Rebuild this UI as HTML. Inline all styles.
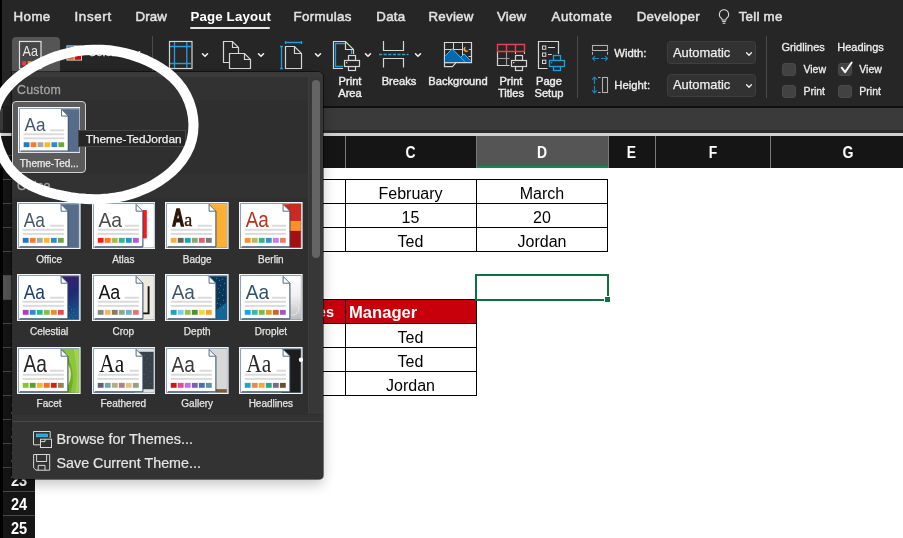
<!DOCTYPE html><html><head><meta charset="utf-8"><title>Excel Themes</title><style>
*{margin:0;padding:0;box-sizing:border-box}
html,body{width:903px;height:538px;overflow:hidden;background:#fff}
body{position:relative;font-family:"Liberation Sans",sans-serif;color:#fff}
.a{position:absolute}
.t{position:absolute;white-space:nowrap;line-height:1}
.tab{position:absolute;top:10px;font-size:13.3px;line-height:14px;white-space:nowrap;color:#e2e2e2;-webkit-text-stroke:0.5px #e2e2e2}
.lbl{position:absolute;font-size:10.4px;line-height:12.2px;white-space:nowrap;color:#ededed;text-align:center;transform:translateX(-50%) scaleX(1.07);-webkit-text-stroke:0.4px #ededed}
.cell{position:absolute;font-size:16px;line-height:25px;color:#000;text-align:center;white-space:nowrap}
.hl{position:absolute;background:#000;height:1px}
.vl{position:absolute;background:#000;width:1px}
.ch{position:absolute;top:136px;height:32px;font-weight:bold;font-size:17.4px;line-height:32.6px;text-align:center;color:#fff;transform:scaleX(0.8)}
.rh{position:absolute;left:3px;width:32px;height:24px;border-top:1px solid #4a4a4a}.rh span{display:block;font-weight:bold;font-size:17.4px;line-height:25px;text-align:center;color:#fff;transform:scaleX(0.84)}
.th{position:absolute;width:64px;height:48px;background:#fff;border:1px solid #8094ad;overflow:hidden}
.tl{position:absolute;font-size:10px;line-height:11px;color:#e4e4e4;text-align:center;width:74px;white-space:nowrap;-webkit-text-stroke:0.25px #e4e4e4}
.cb{position:absolute;width:13.5px;height:13.5px;background:#424242;border:1px solid #4a4a4a;border-radius:3px}
</style></head><body><div id="app" style="position:absolute;left:0;top:0;width:903px;height:538px;will-change:transform">
<div class="a" style="left:0;top:0;width:3px;height:538px;background:#000"></div>
<div class="a" style="left:2px;top:0;width:901px;height:106px;background:#262626"></div>
<div class="a" style="left:0;top:105.5px;width:903px;height:2.5px;background:#0f0f0f"></div>
<div class="a" style="left:0;top:108px;width:903px;height:21.5px;background:#3a3a3a"></div>
<div class="a" style="left:0;top:129.5px;width:903px;height:4px;background:#2b2b2b"></div>
<div class="a" style="left:0;top:133.3px;width:903px;height:2.4px;background:#d0d0d0"></div>
<div class="a" style="left:0;top:135.6px;width:903px;height:32.4px;background:#151515"></div>
<div class="a" style="left:2.5px;top:105.5px;width:10px;height:27.8px;background:#202020"></div>
<div class="a" style="left:3px;top:168px;width:32px;height:370px;background:#151515"></div>
<div class="a" style="left:476px;top:136px;width:132px;height:32px;background:#555"></div>
<div class="a" style="left:476px;top:166.3px;width:132px;height:2.2px;background:#138a50"></div>
<div class="a" style="left:345px;top:136px;width:1px;height:32px;background:#7a7a7a"></div>
<div class="a" style="left:476px;top:136px;width:1px;height:32px;background:#7a7a7a"></div>
<div class="a" style="left:607.5px;top:136px;width:1px;height:32px;background:#7a7a7a"></div>
<div class="a" style="left:654.5px;top:136px;width:1px;height:32px;background:#7a7a7a"></div>
<div class="a" style="left:770.4px;top:136px;width:1px;height:32px;background:#7a7a7a"></div>
<div class="ch" style="left:345px;width:131px">C</div>
<div class="ch" style="left:476px;width:132px">D</div>
<div class="ch" style="left:608px;width:47px">E</div>
<div class="ch" style="left:655px;width:116px">F</div>
<div class="ch" style="left:771px;width:154px">G</div>
<div class="rh" style="top:179.3px;"><span>11</span></div>
<div class="rh" style="top:203.3px;"><span>12</span></div>
<div class="rh" style="top:227.3px;"><span>13</span></div>
<div class="rh" style="top:251.3px;"><span>14</span></div>
<div class="rh" style="top:275.3px; background:#555;"><span>15</span></div>
<div class="rh" style="top:299.3px;"><span>16</span></div>
<div class="rh" style="top:323.3px;"><span>17</span></div>
<div class="rh" style="top:347.3px;"><span>18</span></div>
<div class="rh" style="top:371.3px;"><span>19</span></div>
<div class="rh" style="top:395.3px;"><span>20</span></div>
<div class="rh" style="top:419.3px;"><span>21</span></div>
<div class="rh" style="top:443.3px;"><span>22</span></div>
<div class="rh" style="top:467.3px;"><span>23</span></div>
<div class="rh" style="top:491.3px;"><span>24</span></div>
<div class="rh" style="top:515.3px;"><span>25</span></div>
<div class="rh" style="top:155.3px;height:24px"></div>
<div class="a" style="left:36px;top:178.8px;width:572px;height:1.2px;background:#000"></div>
<div class="a" style="left:36px;top:202.8px;width:572px;height:1.2px;background:#000"></div>
<div class="a" style="left:36px;top:226.8px;width:572px;height:1.2px;background:#000"></div>
<div class="a" style="left:36px;top:250.8px;width:572px;height:1.2px;background:#000"></div>
<div class="a" style="left:344.6px;top:178.8px;width:1.2px;height:73.2px;background:#000"></div>
<div class="a" style="left:475.8px;top:178.8px;width:1.2px;height:73.2px;background:#000"></div>
<div class="a" style="left:607.2px;top:178.8px;width:1.2px;height:73.2px;background:#000"></div>
<div class="cell" style="left:345px;width:131px;top:180.5px;">February</div>
<div class="cell" style="left:476px;width:132px;top:180.5px;">March</div>
<div class="cell" style="left:345px;width:131px;top:204.5px;">15</div>
<div class="cell" style="left:476px;width:132px;top:204.5px;">20</div>
<div class="cell" style="left:345px;width:131px;top:228.5px;">Ted</div>
<div class="cell" style="left:476px;width:132px;top:228.5px;">Jordan</div>
<div class="a" style="left:36px;top:299px;width:440px;height:24px;background:#c7000b"></div>
<div class="a" style="left:36px;top:298.8px;width:441px;height:1.2px;background:#000"></div>
<div class="a" style="left:36px;top:322.8px;width:441px;height:1.2px;background:#000"></div>
<div class="a" style="left:36px;top:346.8px;width:441px;height:1.2px;background:#000"></div>
<div class="a" style="left:36px;top:370.8px;width:441px;height:1.2px;background:#000"></div>
<div class="a" style="left:36px;top:394.8px;width:441px;height:1.2px;background:#000"></div>
<div class="a" style="left:344.6px;top:298.8px;width:1.2px;height:97.2px;background:#000"></div>
<div class="a" style="left:475.8px;top:298.8px;width:1.2px;height:97.2px;background:#000"></div>
<div class="cell" style="left:349px;width:120px;top:299.6px;text-align:left;color:#fff;font-weight:bold;font-size:16.6px">Manager</div>
<div class="cell" style="left:290px;width:44px;top:299.8px;text-align:right;color:#fff;font-weight:bold;font-size:14.5px">Sales</div>
<div class="cell" style="left:345px;width:131px;top:324.5px;">Ted</div>
<div class="cell" style="left:345px;width:131px;top:348.5px;">Ted</div>
<div class="cell" style="left:345px;width:131px;top:372.5px;">Jordan</div>
<div class="a" style="left:475px;top:274px;width:134px;height:27px;border:2px solid #10703f"></div>
<div class="a" style="left:604px;top:296px;width:7px;height:7px;background:#10703f;border:1px solid #fff"></div>
<div class="tab" style="left:13.6px;letter-spacing:0.4px">Home</div>
<div class="tab" style="left:74.4px;letter-spacing:0.7px">Insert</div>
<div class="tab" style="left:135.5px;letter-spacing:0.1px">Draw</div>
<div class="tab" style="left:293.6px;letter-spacing:0.35px">Formulas</div>
<div class="tab" style="left:376.3px;letter-spacing:0.25px">Data</div>
<div class="tab" style="left:428.5px;letter-spacing:0.25px">Review</div>
<div class="tab" style="left:497px;letter-spacing:0.2px">View</div>
<div class="tab" style="left:551.6px;letter-spacing:0.48px">Automate</div>
<div class="tab" style="left:636.7px;letter-spacing:0.3px">Developer</div>
<div class="tab" style="left:738.7px;letter-spacing:0.25px">Tell me</div>
<div class="tab" style="left:190.4px;font-weight:bold;color:#fff;-webkit-text-stroke:0;letter-spacing:0.15px">Page Layout</div>
<div class="a" style="left:190.4px;top:27.2px;width:79.4px;height:2.2px;border-radius:1px;background:#e6e6e6"></div>
<svg class="a" style="left:716px;top:8px" width="16" height="18" viewBox="0 0 16 18"><path d="M8 1.8a4.6 4.6 0 0 0-2.6 8.4c.5.5.7 1 .7 1.8h3.8c0-.8.2-1.300.7-1.800A4.600 4.600 0 0 0 8 1.800z" fill="none" stroke="#dcdcdc" stroke-width="1.100"/><path d="M6.200 13.500h3.600M6.600 15.200h2.800" stroke="#dcdcdc" stroke-width="1.100" fill="none"/></svg>
<div class="a" style="left:12px;top:37px;width:48px;height:36px;background:#555;border-radius:4px 4px 0 0"></div>
<svg class="a" style="left:18px;top:40px;" width="26" height="30" viewBox="0 0 26 30"><rect x="1.5" y="1.5" width="21.5" height="27" fill="#464646" stroke="#e0e0e0" stroke-width="1.2"/><text x="4.6" y="15.7" font-family="Liberation Sans,sans-serif" font-size="14.6" fill="#e8e8e8" textLength="15.4" lengthAdjust="spacingAndGlyphs">Aa</text><rect x="4.1" y="21.2" width="3.9" height="4.2" fill="#e8394f"/><rect x="9.7" y="21.2" width="3.9" height="4.2" fill="#f0a030"/><rect x="15.3" y="21.2" width="3.9" height="4.2" fill="#3a9ad9"/></svg>
<svg class="a" style="left:66px;top:45px;" width="17" height="16" viewBox="0 0 17 16"><rect x="0.5" y="0.5" width="15.5" height="15" fill="#f4f4f4"/><rect x="1.2" y="1.2" width="6.6" height="6.4" fill="#2b88d8"/><rect x="8.6" y="1.2" width="6.6" height="6.4" fill="#e8e8e8"/><rect x="1.2" y="8.4" width="6.6" height="6.4" fill="#d9682a"/><rect x="8.6" y="8.4" width="6.6" height="6.4" fill="#c9100e"/></svg>
<div class="t" style="left:88px;top:46.5px;font-size:11.5px;color:#eee;-webkit-text-stroke:0.3px #eee">Colors</div>
<svg class="a" style="left:131px;top:47.5px;" width="12" height="10" viewBox="0 0 12 10"><path d="M3.5 3.75L6 6.25L8.5 3.75" fill="none" stroke="#f0f0f0" stroke-width="1.6" stroke-linecap="round" stroke-linejoin="round"/></svg>
<div class="a" style="left:152px;top:36px;width:1px;height:35px;background:#4a4a4a"></div>
<div class="a" style="left:577px;top:36px;width:1px;height:62px;background:#4a4a4a"></div>
<div class="a" style="left:766px;top:36px;width:1px;height:62px;background:#4a4a4a"></div>
<svg class="a" style="left:0;top:0" width="903" height="106" viewBox="0 0 903 106"><rect x="169.5" y="41.5" width="22.5" height="27" fill="#2a2726" stroke="#d6d6d6" stroke-width="1.2"/><path d="M174.5 42v26M186.8 42v26M170 46.5h21.5M170 63.5h21.5" stroke="#1ba1e2" stroke-width="1.3" fill="none"/><path d="M229.5 62.5H223.5V41.5H232.5L238.5 47.5V53.5" fill="none" stroke="#d6d6d6" stroke-width="1.2"/><path d="M232.5 41.5V47.5H238.5" fill="none" stroke="#d6d6d6" stroke-width="1.2"/><path d="M229.5 53.5H244.5L250.5 59.5V68.5H229.5z" fill="none" stroke="#d6d6d6" stroke-width="1.2"/><path d="M244.5 53.5V59.5H250.5" fill="none" stroke="#d6d6d6" stroke-width="1.2"/><path d="M285.5 46.5H294.5L301.5 53.5V68.5H285.5z" fill="none" stroke="#d6d6d6" stroke-width="1.2"/><path d="M294.5 46.5V53.5H301.5" fill="none" stroke="#d6d6d6" stroke-width="1.2"/><path d="M285.5 42.5H301.5M285.5 41V44M301.5 41V44M281.5 46.5V68.5M280 46.5H283M280 68.5H283" fill="none" stroke="#1ba1e2" stroke-width="1.3"/></svg>
<svg class="a" style="left:198.8px;top:50.4px;" width="12" height="10" viewBox="0 0 12 10"><path d="M3.5 3.75L6 6.25L8.5 3.75" fill="none" stroke="#f0f0f0" stroke-width="1.6" stroke-linecap="round" stroke-linejoin="round"/></svg>
<svg class="a" style="left:255px;top:50.4px;" width="12" height="10" viewBox="0 0 12 10"><path d="M3.5 3.75L6 6.25L8.5 3.75" fill="none" stroke="#f0f0f0" stroke-width="1.6" stroke-linecap="round" stroke-linejoin="round"/></svg>
<svg class="a" style="left:312px;top:50.4px;" width="12" height="10" viewBox="0 0 12 10"><path d="M3.5 3.75L6 6.25L8.5 3.75" fill="none" stroke="#f0f0f0" stroke-width="1.6" stroke-linecap="round" stroke-linejoin="round"/></svg>
<svg class="a" style="left:0;top:0" width="903" height="106" viewBox="0 0 903 106"><path d="M343 68.5H333.5V41.5H345.5L353.5 49.5V54" fill="none" stroke="#d6d6d6" stroke-width="1.2"/><path d="M345.5 41.5V49.5H353.5" fill="none" stroke="#d6d6d6" stroke-width="1.2"/><path d="M345 43.5H335.5V66.5H343M351.5 50V54" fill="none" stroke="#1ba1e2" stroke-width="1.3"/><rect x="348.5" y="55.5" width="7" height="5" fill="#262626" stroke="#d6d6d6" stroke-width="1.2"/><rect x="348.5" y="66.5" width="7" height="4" fill="#262626" stroke="#d6d6d6" stroke-width="1.2"/><rect x="344.5" y="60.5" width="15" height="6" fill="#262626" stroke="#d6d6d6" stroke-width="1.2"/><rect x="346" y="62" width="1.3" height="1.3" fill="#d6d6d6"/><path d="M383.5 41v9.5h20V41M383.5 67.5v-9h20v9" fill="none" stroke="#d6d6d6" stroke-width="1.2"/><path d="M379 54.5h29.5" stroke="#1ba1e2" stroke-width="1.3" stroke-dasharray="3.2 1.4" fill="none"/><path d="M444.5 42.5h27v20.2H456.1l-3.7 4H444.5z" fill="none" stroke="#d6d6d6" stroke-width="1.2"/><path d="M453.5 42.5v7M462.5 42.5v13M444.5 49.5h18.5M468.8 49.5h2.7M468.5 56.5h3" stroke="#d6d6d6" stroke-width="1" fill="none"/><path d="M445.1 62V56.2L452.1 48.7L460.7 57.3L464.1 53.9L471 61.4V62z" fill="#0069b4"/><path d="M445.1 56.2L452.1 48.7L465 61.8M460.7 57.3L464.1 53.9L471 61.3" fill="none" stroke="#5cc4f0" stroke-width="0.9"/><path d="M465.3 47a2.5 2.5 0 1 0 2.8 3.9a2.6 2.6 0 0 1-2.8-3.9z" fill="#f0a848" stroke="#f0a848" stroke-width="0.5"/><path d="M444.5 62.7H456.1" stroke="#d6d6d6" stroke-width="1.2" fill="none"/><path d="M497.5 51.5V65.5H509.5" fill="none" stroke="#d6d6d6" stroke-width="1.2"/><path d="M497.5 58.5H509.5M506.5 51.5V65.5" fill="none" stroke="#a0a0a0" stroke-width="1.1"/><path d="M515.5 51.5v2.5M524.5 51.5v2.5" stroke="#d6d6d6" stroke-width="1.1" fill="none"/><path d="M497.5 44.5h27v7h-27zM506.5 44.5v7M515.5 44.5v7" fill="none" stroke="#e8404f" stroke-width="1.4"/><rect x="515.5" y="55.5" width="7" height="5" fill="#262626" stroke="#d6d6d6" stroke-width="1.2"/><rect x="515.5" y="66.5" width="7" height="4" fill="#262626" stroke="#d6d6d6" stroke-width="1.2"/><rect x="511.5" y="60.5" width="15" height="6" fill="#262626" stroke="#d6d6d6" stroke-width="1.2"/><rect x="513" y="62" width="1.3" height="1.3" fill="#d6d6d6"/><path d="M547.5 68.5H538.5V41.5H558.5V54" fill="none" stroke="#d6d6d6" stroke-width="1.2"/><rect x="542.5" y="46" width="3.3" height="3.3" fill="none" stroke="#d6d6d6" stroke-width="1"/><rect x="542.5" y="53" width="3.3" height="3.3" fill="none" stroke="#d6d6d6" stroke-width="1"/><rect x="542.5" y="60.2" width="3.3" height="3.3" fill="none" stroke="#d6d6d6" stroke-width="1"/><path d="M548 47.5h7M548 54.5h3.8" stroke="#d6d6d6" stroke-width="1.1" fill="none"/><rect x="553.5" y="55.5" width="7" height="5" fill="#262626" stroke="#1ba1e2" stroke-width="1.3"/><rect x="553.5" y="66.5" width="7" height="4" fill="#262626" stroke="#1ba1e2" stroke-width="1.3"/><rect x="549.5" y="60.5" width="15" height="6" fill="#262626" stroke="#1ba1e2" stroke-width="1.3"/><rect x="551" y="62" width="1.3" height="1.3" fill="#1ba1e2"/></svg>
<svg class="a" style="left:362px;top:50.4px;" width="12" height="10" viewBox="0 0 12 10"><path d="M3.5 3.75L6 6.25L8.5 3.75" fill="none" stroke="#f0f0f0" stroke-width="1.6" stroke-linecap="round" stroke-linejoin="round"/></svg>
<svg class="a" style="left:411.5px;top:50.4px;" width="12" height="10" viewBox="0 0 12 10"><path d="M3.5 3.75L6 6.25L8.5 3.75" fill="none" stroke="#f0f0f0" stroke-width="1.6" stroke-linecap="round" stroke-linejoin="round"/></svg>
<div class="lbl" style="left:349.8px;top:76.2px">Print<br>Area</div>
<div class="lbl" style="left:398.8px;top:76.2px">Breaks</div>
<div class="lbl" style="left:458px;top:76.2px">Background</div>
<div class="lbl" style="left:510.7px;top:76.2px">Print<br>Titles</div>
<div class="lbl" style="left:548.7px;top:76.2px">Page<br>Setup</div>
<svg class="a" style="left:0;top:0" width="903" height="106" viewBox="0 0 903 106"><rect x="592.5" y="45.5" width="15" height="5" fill="none" stroke="#b0b0b0" stroke-width="1.1"/><path d="M592.5 52v2.8M607.5 52v2.8" stroke="#b0b0b0" stroke-width="1.1" fill="none"/><path d="M592.6 58.5h6.6M601 58.5h6.6M595 56.1l-2.4 2.4 2.4 2.4M605.2 56.1l2.4 2.4-2.4 2.4" fill="none" stroke="#1b86b8" stroke-width="1.2"/><rect x="602.5" y="77.5" width="5" height="15" fill="none" stroke="#b0b0b0" stroke-width="1.1"/><path d="M598 77.5h2.6M598 92.5h2.6" stroke="#b0b0b0" stroke-width="1.1" fill="none"/><path d="M594.5 77.2v7M594.5 86v6.8M592.1 79.6l2.4-2.4 2.4 2.4M592.1 90.4l2.4 2.4 2.4-2.4" fill="none" stroke="#1b86b8" stroke-width="1.2"/></svg>
<div class="t" style="left:614.3px;top:47.6px;font-size:11.3px;color:#eee;-webkit-text-stroke:0.35px #eee">Width:</div>
<div class="t" style="left:614.3px;top:79.6px;font-size:11.3px;color:#eee;-webkit-text-stroke:0.35px #eee">Height:</div>
<div class="a" style="left:667px;top:41.2px;width:88.5px;height:23.3px;background:#323232;border:1px solid #3e3e3e;border-radius:3.5px"></div>
<div class="t" style="left:673px;top:46.5px;font-size:12.9px;color:#efefef;-webkit-text-stroke:0.25px #efefef">Automatic</div>
<svg class="a" style="left:742.5px;top:49.0px;" width="12" height="10" viewBox="0 0 12 10"><path d="M3.6 3.8L6 6.2L8.4 3.8" fill="none" stroke="#f0f0f0" stroke-width="1.3" stroke-linecap="round" stroke-linejoin="round"/></svg>
<div class="a" style="left:667px;top:73.5px;width:88.5px;height:23.3px;background:#323232;border:1px solid #3e3e3e;border-radius:3.5px"></div>
<div class="t" style="left:673px;top:78.8px;font-size:12.9px;color:#efefef;-webkit-text-stroke:0.25px #efefef">Automatic</div>
<svg class="a" style="left:742.5px;top:81.3px;" width="12" height="10" viewBox="0 0 12 10"><path d="M3.6 3.8L6 6.2L8.4 3.8" fill="none" stroke="#f0f0f0" stroke-width="1.3" stroke-linecap="round" stroke-linejoin="round"/></svg>
<div class="t" style="left:781.4px;top:42px;font-size:11px;color:#eee;-webkit-text-stroke:0.3px #eee">Gridlines</div>
<div class="t" style="left:837.3px;top:42px;font-size:11px;color:#eee;-webkit-text-stroke:0.3px #eee">Headings</div>
<div class="cb" style="left:782.2px;top:62.8px"></div>
<div class="t" style="left:803.4px;top:64.0px;font-size:10.5px;color:#eee;-webkit-text-stroke:0.3px #eee">View</div>
<div class="cb" style="left:782.2px;top:84.5px"></div>
<div class="t" style="left:803.4px;top:85.7px;font-size:10.5px;color:#eee;-webkit-text-stroke:0.3px #eee">Print</div>
<div class="cb" style="left:838.2px;top:62.8px"></div>
<div class="t" style="left:859.3px;top:64.0px;font-size:10.5px;color:#eee;-webkit-text-stroke:0.3px #eee">View</div>
<div class="cb" style="left:838.2px;top:84.5px"></div>
<div class="t" style="left:859.3px;top:85.7px;font-size:10.5px;color:#eee;-webkit-text-stroke:0.3px #eee">Print</div>
<svg class="a" style="left:838px;top:58px;" width="18" height="20" viewBox="0 0 18 20"><path d="M3.7 9.7L7.1 14.1L13.7 4.5" fill="none" stroke="#f4f4f4" stroke-width="2" stroke-linecap="round" stroke-linejoin="round"/></svg>
<div class="a" style="left:12.2px;top:72.2px;width:311.2px;height:407.2px;background:#2f2f2f;border-radius:0 5px 4px 4px;box-shadow:0 5px 13px 0 rgba(0,0,0,.24),0 0 0 1px rgba(0,0,0,.5);overflow:hidden">
<div class="a" style="left:0;top:0;width:311.2px;height:27.5px;background:#323232"></div>
<div class="a" style="left:0;top:0;width:311.2px;height:5.3px;background:#3a3a3a"></div>
<div class="a" style="left:0;top:102px;width:311.2px;height:24px;background:#323232"></div>
<div class="a" style="left:295.6px;top:5.3px;width:16px;height:337px;background:#373737;border-left:1px solid #3c3c3c"></div>
<div class="a" style="left:300.2px;top:7.8px;width:7.6px;height:178px;background:#646464;border-radius:4px"></div>
<div class="a" style="left:0;top:342.5px;width:311.2px;height:65px;background:#333"></div>
<div class="a" style="left:0;top:349px;width:311.2px;height:1.3px;background:#474747"></div>
</div>
<div class="t" style="left:17px;top:84.4px;font-size:12.4px;letter-spacing:0.25px;color:#a2a2a2;-webkit-text-stroke:0.3px #a2a2a2">Custom</div>
<div class="t" style="left:17px;top:180.4px;font-size:12.4px;letter-spacing:0.25px;color:#a2a2a2;-webkit-text-stroke:0.3px #a2a2a2">Office</div>
<div class="a" style="left:12.2px;top:101.1px;width:73.8px;height:72px;background:#5b5b5b;border:1.2px solid #cfcfcf;border-radius:4px"></div>
<div class="tl" style="left:12.2px;top:158.4px;font-size:10px;color:#ececec;-webkit-text-stroke:0.25px #ececec">Theme-Ted...</div>
<svg class="a" style="left:17.6px;top:106.8px" width="62.8" height="46.4" viewBox="0 0 63.6 47.2" preserveAspectRatio="none"><rect x="0" y="0" width="63.6" height="47.2" fill="#f3f6f9"/><rect x="1.7" y="1.7" width="60.2" height="43.8" fill="#fff" stroke="#6e86a2" stroke-width="0.9"/><rect x="43" y="2.2" width="9" height="9" fill="#566c89"/><g transform="translate(50.6,2.2)"><rect x="0" y="0" width="11.2" height="43.3" fill="#566c89"/></g><path d="M2.2 2.2H44.1L51 9.1V44.9H2.2z" fill="#fff"/><path d="M50.9 9.2V44.8H2.8" fill="none" stroke="#2b4766" stroke-width="1"/><path d="M44.1 2.4V9.2H50.9z" fill="#fff" stroke="#2b4766" stroke-width="0.8"/><text x="6.7" y="24.6" font-family="Liberation Sans,sans-serif" font-size="19.6" font-weight="normal" fill="#44566c" textLength="21.2" lengthAdjust="spacingAndGlyphs">Aa</text><rect x="32.8" y="22.8" width="14.1" height="1.9" fill="#d9d9d9"/><rect x="5.7" y="26.8" width="41.2" height="1.9" fill="#d9d9d9"/><rect x="5.7" y="31" width="41.2" height="1.8" fill="#d9d9d9"/><rect x="5.75" y="35.9" width="5.85" height="4.9" fill="#2178c4"/><rect x="12.78" y="35.9" width="5.85" height="4.9" fill="#f47a2e"/><rect x="19.81" y="35.9" width="5.85" height="4.9" fill="#a8a8a8"/><rect x="26.84" y="35.9" width="5.85" height="4.9" fill="#fdb827"/><rect x="33.87" y="35.9" width="5.85" height="4.9" fill="#2b8ad6"/><rect x="40.90" y="35.9" width="5.85" height="4.9" fill="#6aa842"/></svg>
<svg class="a" style="left:17.3px;top:202.2px" width="63.6" height="47.2" viewBox="0 0 63.6 47.2" preserveAspectRatio="none"><rect x="0" y="0" width="63.6" height="47.2" fill="#f3f6f9"/><rect x="1.7" y="1.7" width="60.2" height="43.8" fill="#fff" stroke="#6e86a2" stroke-width="0.9"/><rect x="43" y="2.2" width="9" height="9" fill="#566c89"/><g transform="translate(50.6,2.2)"><rect x="0" y="0" width="11.2" height="43.3" fill="#566c89"/></g><path d="M2.2 2.2H44.1L51 9.1V44.9H2.2z" fill="#fff"/><path d="M50.9 9.2V44.8H2.8" fill="none" stroke="#2b4766" stroke-width="1"/><path d="M44.1 2.4V9.2H50.9z" fill="#fff" stroke="#2b4766" stroke-width="0.8"/><text x="6.7" y="24.6" font-family="Liberation Sans,sans-serif" font-size="19.6" font-weight="normal" fill="#44566c" textLength="21.2" lengthAdjust="spacingAndGlyphs">Aa</text><rect x="32.8" y="22.8" width="14.1" height="1.9" fill="#d9d9d9"/><rect x="5.7" y="26.8" width="41.2" height="1.9" fill="#d9d9d9"/><rect x="5.7" y="31" width="41.2" height="1.8" fill="#d9d9d9"/><rect x="5.75" y="35.9" width="5.85" height="4.9" fill="#2178c4"/><rect x="12.78" y="35.9" width="5.85" height="4.9" fill="#f47a2e"/><rect x="19.81" y="35.9" width="5.85" height="4.9" fill="#a8a8a8"/><rect x="26.84" y="35.9" width="5.85" height="4.9" fill="#fdb827"/><rect x="33.87" y="35.9" width="5.85" height="4.9" fill="#2b8ad6"/><rect x="40.90" y="35.9" width="5.85" height="4.9" fill="#6aa842"/></svg>
<div class="tl" style="left:12.1px;top:254px">Office</div>
<svg class="a" style="left:91.5px;top:202.2px" width="63.6" height="47.2" viewBox="0 0 63.6 47.2" preserveAspectRatio="none"><rect x="0" y="0" width="63.6" height="47.2" fill="#f3f6f9"/><rect x="1.7" y="1.7" width="60.2" height="43.8" fill="#fff" stroke="#6e86a2" stroke-width="0.9"/><g transform="translate(50.6,2.2)"><rect x="0" y="0" width="11.2" height="43.3" fill="#fff"/><rect x="0.2" y="5.9" width="4" height="28.3" fill="#ff1616"/></g><path d="M2.2 2.2H44.1L51 9.1V44.9H2.2z" fill="#fff"/><path d="M50.9 9.2V44.8H2.8" fill="none" stroke="#2b4766" stroke-width="1"/><path d="M44.1 2.4V9.2H50.9z" fill="#fff" stroke="#2b4766" stroke-width="0.8"/><text x="6.4" y="24.6" font-family="Liberation Sans,sans-serif" font-size="19.6" font-weight="normal" fill="#4a4a4a" textLength="23.6" lengthAdjust="spacingAndGlyphs">Aa</text><rect x="32.8" y="22.8" width="14.1" height="1.9" fill="#d9d9d9"/><rect x="5.7" y="26.8" width="41.2" height="1.9" fill="#d9d9d9"/><rect x="5.7" y="31" width="41.2" height="1.8" fill="#d9d9d9"/><rect x="5.75" y="35.9" width="5.85" height="4.9" fill="#f81b13"/><rect x="12.78" y="35.9" width="5.85" height="4.9" fill="#fb7a22"/><rect x="19.81" y="35.9" width="5.85" height="4.9" fill="#a8bd45"/><rect x="26.84" y="35.9" width="5.85" height="4.9" fill="#35b39a"/><rect x="33.87" y="35.9" width="5.85" height="4.9" fill="#1f9ac9"/><rect x="40.90" y="35.9" width="5.85" height="4.9" fill="#b45ad3"/></svg>
<div class="tl" style="left:86.3px;top:254px">Atlas</div>
<svg class="a" style="left:165.4px;top:202.2px" width="63.6" height="47.2" viewBox="0 0 63.6 47.2" preserveAspectRatio="none"><rect x="0" y="0" width="63.6" height="47.2" fill="#f3f6f9"/><rect x="1.7" y="1.7" width="60.2" height="43.8" fill="#fff" stroke="#6e86a2" stroke-width="0.9"/><rect x="43" y="2.2" width="9" height="9" fill="#fbb034"/><g transform="translate(50.6,2.2)"><rect x="0" y="0" width="11.2" height="43.3" fill="#fbb034"/></g><path d="M2.2 2.2H44.1L51 9.1V44.9H2.2z" fill="#fff"/><path d="M50.9 9.2V44.8H2.8" fill="none" stroke="#2b4766" stroke-width="1"/><path d="M44.1 2.4V9.2H50.9z" fill="#fff" stroke="#2b4766" stroke-width="0.8"/><g transform="translate(7.3,24.4) scale(0.66,1)"><text x="0" y="0" font-family="Liberation Sans,sans-serif" font-weight="bold" font-size="24.6" fill="#2a1608" stroke="#2a1608" stroke-width="1.6">A</text></g><text x="19.2" y="24.4" font-family="Liberation Serif,serif" font-size="19.5" fill="#2a1608" stroke="#2a1608" stroke-width="0.4" textLength="8" lengthAdjust="spacingAndGlyphs">a</text><rect x="32.8" y="22.8" width="14.1" height="1.9" fill="#d9d9d9"/><rect x="5.7" y="26.8" width="41.2" height="1.9" fill="#d9d9d9"/><rect x="5.7" y="31" width="41.2" height="1.8" fill="#d9d9d9"/><rect x="5.75" y="35.9" width="5.85" height="4.9" fill="#fbb034"/><rect x="12.78" y="35.9" width="5.85" height="4.9" fill="#66665e"/><rect x="19.81" y="35.9" width="5.85" height="4.9" fill="#17a6b5"/><rect x="26.84" y="35.9" width="5.85" height="4.9" fill="#86a873"/><rect x="33.87" y="35.9" width="5.85" height="4.9" fill="#e0606a"/><rect x="40.90" y="35.9" width="5.85" height="4.9" fill="#7a7a7a"/></svg>
<div class="tl" style="left:160.2px;top:254px">Badge</div>
<svg class="a" style="left:239.1px;top:202.2px" width="63.6" height="47.2" viewBox="0 0 63.6 47.2" preserveAspectRatio="none"><rect x="0" y="0" width="63.6" height="47.2" fill="#f3f6f9"/><rect x="1.7" y="1.7" width="60.2" height="43.8" fill="#fff" stroke="#6e86a2" stroke-width="0.9"/><rect x="43" y="2.2" width="9" height="9" fill="#cc2a20"/><g transform="translate(50.6,2.2)"><rect x="0" y="0" width="11.2" height="43.3" fill="#a50f10"/><rect x="0" y="0" width="11.2" height="16.7" fill="#cc2a20"/><rect x="0" y="16.7" width="11.2" height="10" fill="#fb8f2a"/></g><path d="M2.2 2.2H44.1L51 9.1V44.9H2.2z" fill="#fff"/><path d="M50.9 9.2V44.8H2.8" fill="none" stroke="#2b4766" stroke-width="1"/><path d="M44.1 2.4V9.2H50.9z" fill="#fff" stroke="#2b4766" stroke-width="0.8"/><text x="6.7" y="24.6" font-family="Liberation Sans,sans-serif" font-size="21.8" font-weight="normal" fill="#b8331a" textLength="23.2" lengthAdjust="spacingAndGlyphs">Aa</text><rect x="32.8" y="22.8" width="14.1" height="1.9" fill="#d9d9d9"/><rect x="5.7" y="26.8" width="41.2" height="1.9" fill="#d9d9d9"/><rect x="5.7" y="31" width="41.2" height="1.8" fill="#d9d9d9"/><rect x="5.75" y="35.9" width="5.85" height="4.9" fill="#f7902a"/><rect x="12.78" y="35.9" width="5.85" height="4.9" fill="#c3b36a"/><rect x="19.81" y="35.9" width="5.85" height="4.9" fill="#3fae86"/><rect x="26.84" y="35.9" width="5.85" height="4.9" fill="#3b8fd0"/><rect x="33.87" y="35.9" width="5.85" height="4.9" fill="#c580e8"/><rect x="40.90" y="35.9" width="5.85" height="4.9" fill="#f27a63"/></svg>
<div class="tl" style="left:233.9px;top:254px">Berlin</div>
<svg class="a" style="left:17.3px;top:274.3px" width="63.6" height="47.2" viewBox="0 0 63.6 47.2" preserveAspectRatio="none"><rect x="0" y="0" width="63.6" height="47.2" fill="#f3f6f9"/><rect x="1.7" y="1.7" width="60.2" height="43.8" fill="#fff" stroke="#6e86a2" stroke-width="0.9"/><g transform="translate(50.6,2.2)"><defs><linearGradient id="gc" x1="0" y1="0" x2="0.25" y2="1"><stop offset="0" stop-color="#451a6c"/><stop offset="0.5" stop-color="#1c2a72"/><stop offset="1" stop-color="#1a4f88"/></linearGradient></defs><rect x="-8" y="0" width="19.2" height="43.3" fill="url(#gc)"/><g fill="#2a86b0"><circle cx="2" cy="30" r=".55"/><circle cx="4" cy="33" r=".55"/><circle cx="1.5" cy="36" r=".55"/><circle cx="3.5" cy="38.5" r=".55"/><circle cx="6" cy="36" r=".55"/><circle cx="5" cy="41" r=".55"/><circle cx="2" cy="41.5" r=".55"/><circle cx="8" cy="39" r=".55"/><circle cx="7" cy="33" r=".55"/></g></g><path d="M2.2 2.2H44.1L51 9.1V44.9H2.2z" fill="#fff"/><path d="M50.9 9.2V44.8H2.8" fill="none" stroke="#2b4766" stroke-width="1"/><path d="M44.1 2.4V9.2H50.9z" fill="#fff" stroke="#2b4766" stroke-width="0.8"/><text x="6.7" y="24.6" font-family="Liberation Sans,sans-serif" font-size="19.6" font-weight="normal" fill="#1d3c6e" textLength="21.2" lengthAdjust="spacingAndGlyphs">Aa</text><rect x="32.8" y="22.8" width="14.1" height="1.9" fill="#d9d9d9"/><rect x="5.7" y="26.8" width="41.2" height="1.9" fill="#d9d9d9"/><rect x="5.7" y="31" width="41.2" height="1.8" fill="#d9d9d9"/><rect x="5.75" y="35.9" width="5.85" height="4.9" fill="#ae3ec4"/><rect x="12.78" y="35.9" width="5.85" height="4.9" fill="#3a86d4"/><rect x="19.81" y="35.9" width="5.85" height="4.9" fill="#2eb39a"/><rect x="26.84" y="35.9" width="5.85" height="4.9" fill="#8dbb46"/><rect x="33.87" y="35.9" width="5.85" height="4.9" fill="#ea8d35"/><rect x="40.90" y="35.9" width="5.85" height="4.9" fill="#ea4a4f"/></svg>
<div class="tl" style="left:12.1px;top:326px">Celestial</div>
<svg class="a" style="left:91.5px;top:274.3px" width="63.6" height="47.2" viewBox="0 0 63.6 47.2" preserveAspectRatio="none"><rect x="0" y="0" width="63.6" height="47.2" fill="#f3f6f9"/><rect x="1.7" y="1.7" width="60.2" height="43.8" fill="#fff" stroke="#6e86a2" stroke-width="0.9"/><rect x="43" y="2.2" width="9" height="9" fill="#f0e9e0"/><g transform="translate(50.6,2.2)"><rect x="0" y="0" width="11.2" height="43.3" fill="#f0e9e0"/><path d="M6 10.100V37.200H0.2" fill="none" stroke="#111" stroke-width="1.9"/></g><path d="M2.2 2.2H44.1L51 9.1V44.9H2.2z" fill="#fff"/><path d="M50.9 9.2V44.8H2.8" fill="none" stroke="#2b4766" stroke-width="1"/><path d="M44.1 2.4V9.2H50.9z" fill="#fff" stroke="#2b4766" stroke-width="0.8"/><text x="6.4" y="24.6" font-family="Liberation Sans,sans-serif" font-size="20.4" font-weight="normal" fill="#111111" textLength="21.8" lengthAdjust="spacingAndGlyphs">Aa</text><rect x="32.8" y="22.8" width="14.1" height="1.9" fill="#d9d9d9"/><rect x="5.7" y="26.8" width="41.2" height="1.9" fill="#d9d9d9"/><rect x="5.7" y="31" width="41.2" height="1.8" fill="#d9d9d9"/><rect x="5.75" y="35.9" width="5.85" height="4.9" fill="#8a8a84"/><rect x="12.78" y="35.9" width="5.85" height="4.9" fill="#e8bc62"/><rect x="19.81" y="35.9" width="5.85" height="4.9" fill="#8a7a5c"/><rect x="26.84" y="35.9" width="5.85" height="4.9" fill="#8caa8a"/><rect x="33.87" y="35.9" width="5.85" height="4.9" fill="#6fb0cc"/><rect x="40.90" y="35.9" width="5.85" height="4.9" fill="#e8707a"/></svg>
<div class="tl" style="left:86.3px;top:326px">Crop</div>
<svg class="a" style="left:165.4px;top:274.3px" width="63.6" height="47.2" viewBox="0 0 63.6 47.2" preserveAspectRatio="none"><rect x="0" y="0" width="63.6" height="47.2" fill="#f3f6f9"/><rect x="1.7" y="1.7" width="60.2" height="43.8" fill="#fff" stroke="#6e86a2" stroke-width="0.9"/><g transform="translate(50.6,2.2)"><rect x="-8" y="0" width="19.2" height="43.3" fill="#0c355c"/><path d="M0 43.300V34L11.2 26V43.300z" fill="#12669a"/><g fill="#35b85a"><circle cx="-3" cy="3" r=".55"/><circle cx="1" cy="2" r=".55"/><circle cx="4" cy="4" r=".55"/><circle cx="7" cy="3" r=".55"/><circle cx="9" cy="7" r=".55"/><circle cx="5" cy="9" r=".55"/><circle cx="8" cy="13" r=".55"/><circle cx="4" cy="16" r=".55"/><circle cx="7" cy="19" r=".55"/><circle cx="3" cy="22" r=".55"/><circle cx="8" cy="24" r=".55"/><circle cx="5" cy="28" r=".55"/><circle cx="2" cy="27" r=".55"/><circle cx="8" cy="31" r=".55"/><circle cx="3" cy="12" r=".55"/></g></g><path d="M2.2 2.2H44.1L51 9.1V44.9H2.2z" fill="#fff"/><path d="M50.9 9.2V44.8H2.8" fill="none" stroke="#2b4766" stroke-width="1"/><path d="M44.1 2.4V9.2H50.9z" fill="#fff" stroke="#2b4766" stroke-width="0.8"/><text x="6.7" y="24.6" font-family="Liberation Sans,sans-serif" font-size="20.5" font-weight="normal" fill="#40566a" textLength="23.2" lengthAdjust="spacingAndGlyphs">Aa</text><rect x="32.8" y="22.8" width="14.1" height="1.9" fill="#d9d9d9"/><rect x="5.7" y="26.8" width="41.2" height="1.9" fill="#d9d9d9"/><rect x="5.7" y="31" width="41.2" height="1.8" fill="#d9d9d9"/><rect x="5.75" y="35.9" width="5.85" height="4.9" fill="#1aa6b8"/><rect x="12.78" y="35.9" width="5.85" height="4.9" fill="#7fcdea"/><rect x="19.81" y="35.9" width="5.85" height="4.9" fill="#94c24a"/><rect x="26.84" y="35.9" width="5.85" height="4.9" fill="#4e8f3a"/><rect x="33.87" y="35.9" width="5.85" height="4.9" fill="#f6d348"/><rect x="40.90" y="35.9" width="5.85" height="4.9" fill="#f8a72a"/></svg>
<div class="tl" style="left:160.2px;top:326px">Depth</div>
<svg class="a" style="left:239.1px;top:274.3px" width="63.6" height="47.2" viewBox="0 0 63.6 47.2" preserveAspectRatio="none"><rect x="0" y="0" width="63.6" height="47.2" fill="#f3f6f9"/><rect x="1.7" y="1.7" width="60.2" height="43.8" fill="#fff" stroke="#6e86a2" stroke-width="0.9"/><rect x="43" y="2.2" width="9" height="9" fill="#fff"/><g transform="translate(50.6,2.2)"><defs><linearGradient id="gd" x1="0" y1="0" x2="0" y2="1"><stop offset="0" stop-color="#fff"/><stop offset="0.45" stop-color="#f0f0f0"/><stop offset="1" stop-color="#bcbcbc"/></linearGradient></defs><rect x="0" y="0" width="11.2" height="43.3" fill="url(#gd)"/><circle cx="3" cy="33" r="6" fill="none" stroke="#e6e6e6" stroke-width="1"/></g><path d="M2.2 2.2H44.1L51 9.1V44.9H2.2z" fill="#fff"/><path d="M50.9 9.2V44.8H2.8" fill="none" stroke="#2b4766" stroke-width="1"/><path d="M44.1 2.4V9.2H50.9z" fill="#fff" stroke="#2b4766" stroke-width="0.8"/><text x="6.7" y="24.6" font-family="Liberation Sans,sans-serif" font-size="19.6" font-weight="normal" fill="#30516f" textLength="23.4" lengthAdjust="spacingAndGlyphs">Aa</text><rect x="32.8" y="22.8" width="14.1" height="1.9" fill="#d9d9d9"/><rect x="5.7" y="26.8" width="41.2" height="1.9" fill="#d9d9d9"/><rect x="5.7" y="31" width="41.2" height="1.8" fill="#d9d9d9"/><rect x="5.75" y="35.9" width="5.85" height="4.9" fill="#1d9ff0"/><rect x="12.78" y="35.9" width="5.85" height="4.9" fill="#3fb7a6"/><rect x="19.81" y="35.9" width="5.85" height="4.9" fill="#7cba4a"/><rect x="26.84" y="35.9" width="5.85" height="4.9" fill="#e39a35"/><rect x="33.87" y="35.9" width="5.85" height="4.9" fill="#d2622a"/><rect x="40.90" y="35.9" width="5.85" height="4.9" fill="#a852cf"/></svg>
<div class="tl" style="left:233.9px;top:326px">Droplet</div>
<svg class="a" style="left:17.3px;top:346.6px" width="63.6" height="47.2" viewBox="0 0 63.6 47.2" preserveAspectRatio="none"><rect x="0" y="0" width="63.6" height="47.2" fill="#f3f6f9"/><rect x="1.7" y="1.7" width="60.2" height="43.8" fill="#fff" stroke="#6e86a2" stroke-width="0.9"/><g transform="translate(50.6,2.2)"><rect x="-8" y="0" width="19.2" height="43.3" fill="#6fae1c"/><path d="M0 14Q7 25 0 37z" fill="#d8eab0"/><path d="M-4 0Q10 22 3 43.300H11.200V0z" fill="#8cc63f"/><path d="M6 0Q11 20 8 43.300H11.200V0z" fill="#a4d44a"/></g><path d="M2.2 2.2H44.1L51 9.1V44.9H2.2z" fill="#fff"/><path d="M50.9 9.2V44.8H2.8" fill="none" stroke="#2b4766" stroke-width="1"/><path d="M44.1 2.4V9.2H50.9z" fill="#fff" stroke="#2b4766" stroke-width="0.8"/><text x="6.5" y="24.6" font-family="Liberation Sans,sans-serif" font-size="23.2" font-weight="normal" fill="#262626" textLength="23.4" lengthAdjust="spacingAndGlyphs">Aa</text><rect x="32.8" y="22.8" width="14.1" height="1.9" fill="#d9d9d9"/><rect x="5.7" y="26.8" width="41.2" height="1.9" fill="#d9d9d9"/><rect x="5.7" y="31" width="41.2" height="1.8" fill="#d9d9d9"/><rect x="5.75" y="35.9" width="5.85" height="4.9" fill="#8fc12e"/><rect x="12.78" y="35.9" width="5.85" height="4.9" fill="#55a02a"/><rect x="19.81" y="35.9" width="5.85" height="4.9" fill="#f5b52e"/><rect x="26.84" y="35.9" width="5.85" height="4.9" fill="#f46f20"/><rect x="33.87" y="35.9" width="5.85" height="4.9" fill="#cc2418"/><rect x="40.90" y="35.9" width="5.85" height="4.9" fill="#918556"/></svg>
<div class="tl" style="left:12.1px;top:398px">Facet</div>
<svg class="a" style="left:91.5px;top:346.6px" width="63.6" height="47.2" viewBox="0 0 63.6 47.2" preserveAspectRatio="none"><rect x="0" y="0" width="63.6" height="47.2" fill="#f3f6f9"/><rect x="1.7" y="1.7" width="60.2" height="43.8" fill="#fff" stroke="#6e86a2" stroke-width="0.9"/><g transform="translate(50.6,2.2)"><rect x="-8" y="0" width="19.2" height="43.3" fill="#e0e0e0"/><rect x="-8" y="2.6" width="19" height="37.4" fill="#3a4048"/><g fill="#2f6f9a"><circle cx="2" cy="6" r=".55"/><circle cx="5" cy="9" r=".55"/><circle cx="8" cy="6" r=".55"/><circle cx="3" cy="13" r=".55"/><circle cx="7" cy="15" r=".55"/><circle cx="4" cy="19" r=".55"/><circle cx="8" cy="22" r=".55"/><circle cx="2" cy="25" r=".55"/><circle cx="6" cy="28" r=".55"/><circle cx="3" cy="32" r=".55"/><circle cx="8" cy="34" r=".55"/><circle cx="5" cy="37" r=".55"/></g></g><path d="M2.2 2.2H44.1L51 9.1V44.9H2.2z" fill="#fff"/><path d="M50.9 9.2V44.8H2.8" fill="none" stroke="#2b4766" stroke-width="1"/><path d="M44.1 2.4V9.2H50.9z" fill="#fff" stroke="#2b4766" stroke-width="0.8"/><text x="7.3" y="24.6" font-family="Liberation Serif,serif" font-size="24.7" font-weight="normal" fill="#151515" textLength="25" lengthAdjust="spacingAndGlyphs">Aa</text><rect x="37.5" y="22.8" width="9.4" height="1.9" fill="#d9d9d9"/><rect x="5.7" y="26.8" width="41.2" height="1.9" fill="#d9d9d9"/><rect x="5.7" y="31" width="41.2" height="1.8" fill="#d9d9d9"/><rect x="5.75" y="35.9" width="5.85" height="4.9" fill="#5f6470"/><rect x="12.78" y="35.9" width="5.85" height="4.9" fill="#76a5a8"/><rect x="19.81" y="35.9" width="5.85" height="4.9" fill="#b3ad8a"/><rect x="26.84" y="35.9" width="5.85" height="4.9" fill="#b07f83"/><rect x="33.87" y="35.9" width="5.85" height="4.9" fill="#e2c08a"/><rect x="40.90" y="35.9" width="5.85" height="4.9" fill="#92a283"/></svg>
<div class="tl" style="left:86.3px;top:398px">Feathered</div>
<svg class="a" style="left:165.4px;top:346.6px" width="63.6" height="47.2" viewBox="0 0 63.6 47.2" preserveAspectRatio="none"><rect x="0" y="0" width="63.6" height="47.2" fill="#f3f6f9"/><rect x="1.7" y="1.7" width="60.2" height="43.8" fill="#fff" stroke="#6e86a2" stroke-width="0.9"/><g transform="translate(50.6,2.2)"><rect x="-8" y="0" width="19.2" height="43.3" fill="#d8d8d8"/><rect x="0" y="40" width="11.2" height="3.3" fill="#7a5a2c"/></g><path d="M2.2 2.2H44.1L51 9.1V44.9H2.2z" fill="#fff"/><path d="M50.9 9.2V44.8H2.8" fill="none" stroke="#2b4766" stroke-width="1"/><path d="M44.1 2.4V9.2H50.9z" fill="#fff" stroke="#2b4766" stroke-width="0.8"/><text x="6.5" y="24.6" font-family="Liberation Sans,sans-serif" font-size="21.4" font-weight="normal" fill="#3b3b3b" textLength="23.4" lengthAdjust="spacingAndGlyphs">Aa</text><rect x="34.5" y="22.8" width="12.4" height="1.9" fill="#d9d9d9"/><rect x="5.7" y="26.8" width="41.2" height="1.9" fill="#d9d9d9"/><rect x="5.7" y="31" width="41.2" height="1.8" fill="#d9d9d9"/><rect x="5.75" y="35.9" width="5.85" height="4.9" fill="#c01c1c"/><rect x="12.78" y="35.9" width="5.85" height="4.9" fill="#e84a8c"/><rect x="19.81" y="35.9" width="5.85" height="4.9" fill="#c070e8"/><rect x="26.84" y="35.9" width="5.85" height="4.9" fill="#7a60b4"/><rect x="33.87" y="35.9" width="5.85" height="4.9" fill="#4a6fa8"/><rect x="40.90" y="35.9" width="5.85" height="4.9" fill="#5a92a4"/></svg>
<div class="tl" style="left:160.2px;top:398px">Gallery</div>
<svg class="a" style="left:239.1px;top:346.6px" width="63.6" height="47.2" viewBox="0 0 63.6 47.2" preserveAspectRatio="none"><rect x="0" y="0" width="63.6" height="47.2" fill="#f3f6f9"/><rect x="1.7" y="1.7" width="60.2" height="43.8" fill="#fff" stroke="#6e86a2" stroke-width="0.9"/><g transform="translate(50.6,2.2)"><rect x="-8" y="0" width="19.2" height="43.3" fill="#1c1c1c"/><circle cx="11.4" cy="10.5" r="2.2" fill="#fff"/></g><path d="M2.2 2.2H44.1L51 9.1V44.9H2.2z" fill="#fff"/><path d="M50.9 9.2V44.8H2.8" fill="none" stroke="#2b4766" stroke-width="1"/><path d="M44.1 2.4V9.2H50.9z" fill="#fff" stroke="#2b4766" stroke-width="0.8"/><text x="7.3" y="24.6" font-family="Liberation Serif,serif" font-size="24.7" font-weight="normal" fill="#2a2a2a" textLength="25" lengthAdjust="spacingAndGlyphs">Aa</text><rect x="37.5" y="22.8" width="9.4" height="1.9" fill="#d9d9d9"/><rect x="5.7" y="26.8" width="41.2" height="1.9" fill="#d9d9d9"/><rect x="5.7" y="31" width="41.2" height="1.8" fill="#d9d9d9"/><rect x="5.75" y="35.9" width="5.85" height="4.9" fill="#20a6c0"/><rect x="12.78" y="35.9" width="5.85" height="4.9" fill="#e88a50"/><rect x="19.81" y="35.9" width="5.85" height="4.9" fill="#f2a93a"/><rect x="26.84" y="35.9" width="5.85" height="4.9" fill="#24a690"/><rect x="33.87" y="35.9" width="5.85" height="4.9" fill="#7a6a84"/><rect x="40.90" y="35.9" width="5.85" height="4.9" fill="#6b4f2c"/></svg>
<div class="tl" style="left:233.9px;top:398px">Headlines</div>
<div class="a" style="left:78.2px;top:129.5px;width:108.2px;height:17.8px;background:#262626;border:1px solid #454545"></div>
<div class="t" style="left:85.8px;top:133.7px;font-size:11.8px;color:#f2f2f2;-webkit-text-stroke:0.25px #f2f2f2">Theme-TedJordan</div>
<div class="t" style="left:56.5px;top:431.9px;font-size:14.4px;color:#e6e6e6;-webkit-text-stroke:0.2px #e6e6e6">Browse for Themes...</div>
<div class="t" style="left:56.5px;top:456.2px;font-size:14.3px;color:#e6e6e6;-webkit-text-stroke:0.2px #e6e6e6">Save Current Theme...</div>
<svg class="a" style="left:32px;top:430px;" width="22" height="20" viewBox="0 0 22 20"><path d="M1.5 1.500H18.200V8M10 14.800H1.500V1.5" fill="none" stroke="#d8d8d8" stroke-width="1"/><rect x="4.3" y="4" width="11.2" height="2.8" fill="#1ba1e2" stroke="#6cc8f5" stroke-width="0.6"/><rect x="8.5" y="9.2" width="11" height="8.3" fill="#313131" stroke="#d8d8d8" stroke-width="1"/><path d="M8.5 11.600h4.500v-2.4" fill="none" stroke="#d8d8d8" stroke-width="1"/></svg>
<svg class="a" style="left:32px;top:453px;" width="20" height="20" viewBox="0 0 20 20"><path d="M1.6 1.500H17.700V17.200H4L1.6 14.800z" fill="none" stroke="#d8d8d8" stroke-width="1"/><path d="M4.6 1.500v7h10v-7M6.2 17.200v-4.800h6.800v4.8" fill="none" stroke="#d8d8d8" stroke-width="1"/></svg>
<svg class="a" style="left:0;top:0" width="903" height="538" viewBox="0 0 903 538"><path d="M94.1 49.7 L101.7 49.8 L109.3 50.3 L116.8 51.4 L124.2 52.9 L131.6 54.9 L138.9 57.4 L146.1 60.3 L153.1 63.7 L159.9 67.6 L166.3 72.0 L172.3 77.0 L177.6 82.5 L182.3 88.5 L186.2 95.2 L189.3 102.3 L191.6 109.7 L193.0 117.3 L193.5 124.9 L193.1 132.5 L191.7 140.0 L189.4 147.1 L186.1 153.8 L182.0 160.2 L177.2 166.1 L171.7 171.6 L165.6 176.6 L159.2 181.1 L152.4 185.2 L145.3 188.7 L138.2 191.7 L130.9 194.1 L123.6 196.1 L116.1 197.5 L108.6 198.5 L101.1 199.1 L93.5 199.2 L85.8 198.9 L78.2 198.2 L70.5 197.2 L62.9 195.8 L55.2 194.1 L47.7 192.1 L40.3 189.6 L33.2 186.6 L26.5 183.0 L20.3 178.8 L14.7 173.9 L9.7 168.3 L5.5 162.0 L1.9 155.1 L-1.1 147.9 L-3.4 140.3 L-5.0 132.5 L-5.8 124.7 L-5.8 116.9 L-4.7 109.4 L-2.4 102.4 L0.9 95.9 L5.2 89.8 L10.3 84.1 L15.9 78.9 L22.0 74.1 L28.5 69.7 L35.2 65.7 L42.1 62.2 L49.2 59.0 L56.4 56.3 L63.8 54.1 L71.3 52.3 L78.9 50.9 L86.5 50.1Z" fill="none" stroke="#fff" stroke-width="10.1" stroke-linejoin="round"/></svg>
</div></body></html>
